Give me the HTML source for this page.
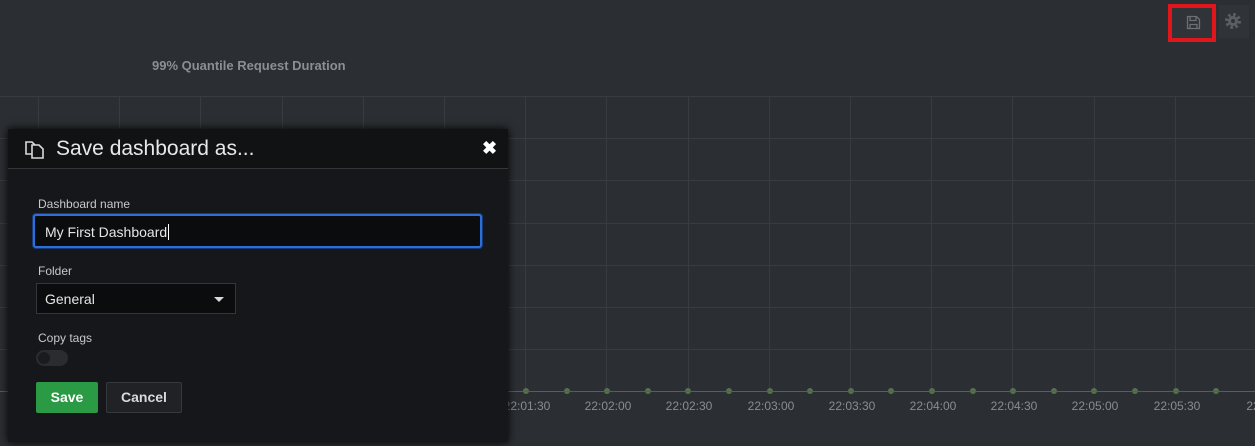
<!DOCTYPE html>
<html><head><style>
body{margin:0;width:1255px;height:446px;background:#2b2e32;font-family:"Liberation Sans",Arial,sans-serif;overflow:hidden;position:relative}
.vl{position:absolute;top:96px;height:295px;width:1px;background:#383b3f}
.hl{position:absolute;left:0;width:1255px;height:1px;background:#383b3f}
.t{position:absolute;top:399px;font-size:12px;color:#8a8c90;width:60px;text-align:center}
.pt{position:absolute;top:388px;width:6px;height:6px;border-radius:50%;background:#56704f}
</style></head><body>
<div style="position:absolute;left:152px;top:58px;font-size:13px;color:#8c8e92;font-weight:bold">99% Quantile Request Duration</div>
<div id="g"></div>
<div style="position:absolute;left:0;right:0;top:391px;height:1px;background:#4f6649"></div>
<div style="position:absolute;left:1168px;top:4px;width:48px;height:38px;border:4px solid #e0161d;box-sizing:border-box;background:#303337"></div>
<svg style="position:absolute;left:1186px;top:15px" width="15" height="15" viewBox="0 0 15 15" fill="none" stroke="#6d7075" stroke-width="1.3"><path d="M1.5 1.5h9l3 3v9h-12z"/><path d="M4 1.5v4h6v-4M4 13.5v-4h7v4"/></svg>
<div style="position:absolute;left:1219px;top:5px;width:30px;height:33px;background:#303337"></div>
<svg style="position:absolute;left:1224px;top:12px" width="18" height="18" viewBox="0 0 18 18"><circle cx="9" cy="9" r="6" fill="none" stroke="#5b5e62" stroke-width="4" stroke-dasharray="2.4 2.3"/><circle cx="9" cy="9" r="5" fill="#5b5e62"/><circle cx="9" cy="9" r="2" fill="#303337"/></svg>
<div style="position:absolute;left:8px;top:129px;width:500px;height:313px;background:#16171a;box-shadow:0 0 8px #000">
 <div style="height:39px;border-bottom:1px solid #34363a;background:#111214;position:relative">
  <svg style="position:absolute;left:15px;top:9px" width="22" height="22" viewBox="0 0 22 22" fill="none" stroke="#d8d9da" stroke-width="1.6"><path d="M3 4h6l3 3v9H3z"/><path d="M9 7h7l4 4v9H9z" fill="#111214"/></svg>
  <div style="position:absolute;left:48px;top:8px;font-size:21px;color:#e8e8e8">Save dashboard as...</div>
  <div style="position:absolute;left:474px;top:9px;font-size:18px;color:#fff;font-weight:bold">✖</div>
 </div>
 <div style="position:absolute;left:30px;top:68px;font-size:12px;color:#c7c8cb">Dashboard name</div>
 <div style="position:absolute;left:25px;top:85px;width:449px;height:34px;border:2px solid #2f6ed4;border-radius:3px;box-sizing:border-box;background:#0b0c0e;box-shadow:0 0 0 1px #153b7a"><div style="position:absolute;left:10px;top:8px;font-size:14px;color:#e5e5e5">My First Dashboard<span style="border-left:1px solid #fff;margin-left:1px"></span></div></div>
 <div style="position:absolute;left:30px;top:135px;font-size:12px;color:#c7c8cb">Folder</div>
 <div style="position:absolute;left:28px;top:154px;width:200px;height:31px;border:1px solid #33363a;box-sizing:border-box;background:#0b0c0e"><div style="position:absolute;left:8px;top:7px;font-size:14px;color:#e5e5e5">General</div><div style="position:absolute;left:177px;top:13px;border:5px solid transparent;border-top:5px solid #d8d9da;border-bottom:0"></div></div>
 <div style="position:absolute;left:30px;top:202px;font-size:12px;color:#c7c8cb">Copy tags</div>
 <div style="position:absolute;left:28px;top:221px;width:32px;height:16px;border-radius:8px;background:#2a2c30"><div style="position:absolute;left:2px;top:2px;width:12px;height:12px;border-radius:50%;background:#1a1b1e"></div></div>
 <div style="position:absolute;left:28px;top:253px;width:62px;height:31px;background:#2a9a45;border-radius:2px;color:#fff;font-weight:bold;font-size:14px;text-align:center;line-height:31px">Save</div>
 <div style="position:absolute;left:98px;top:253px;width:76px;height:31px;background:#202226;border:1px solid #35383c;box-sizing:border-box;border-radius:2px;color:#d8d9da;font-weight:bold;font-size:14px;text-align:center;line-height:29px">Cancel</div>
</div>
<script>
var g=document.getElementById('g'),h='';
for(var x=38;x<1255;x+=81.2)h+='<div class="vl" style="left:'+Math.round(x)+'px"></div>';
for(var y=96;y<360;y+=42.2)h+='<div class="hl" style="top:'+Math.round(y)+'px"></div>';
var lb=['22:01:30','22:02:00','22:02:30','22:03:00','22:03:30','22:04:00','22:04:30','22:05:00','22:05:30','22:0'];
for(var i=0;i<lb.length;i++)h+='<div class="t" style="left:'+Math.round(497+i*81.2)+'px">'+lb[i]+'</div>';
for(var x=526;x<1255;x+=40.6)h+='<div class="pt" style="left:'+Math.round(x-3)+'px"></div>';
g.innerHTML=h;
</script>
</body></html>
